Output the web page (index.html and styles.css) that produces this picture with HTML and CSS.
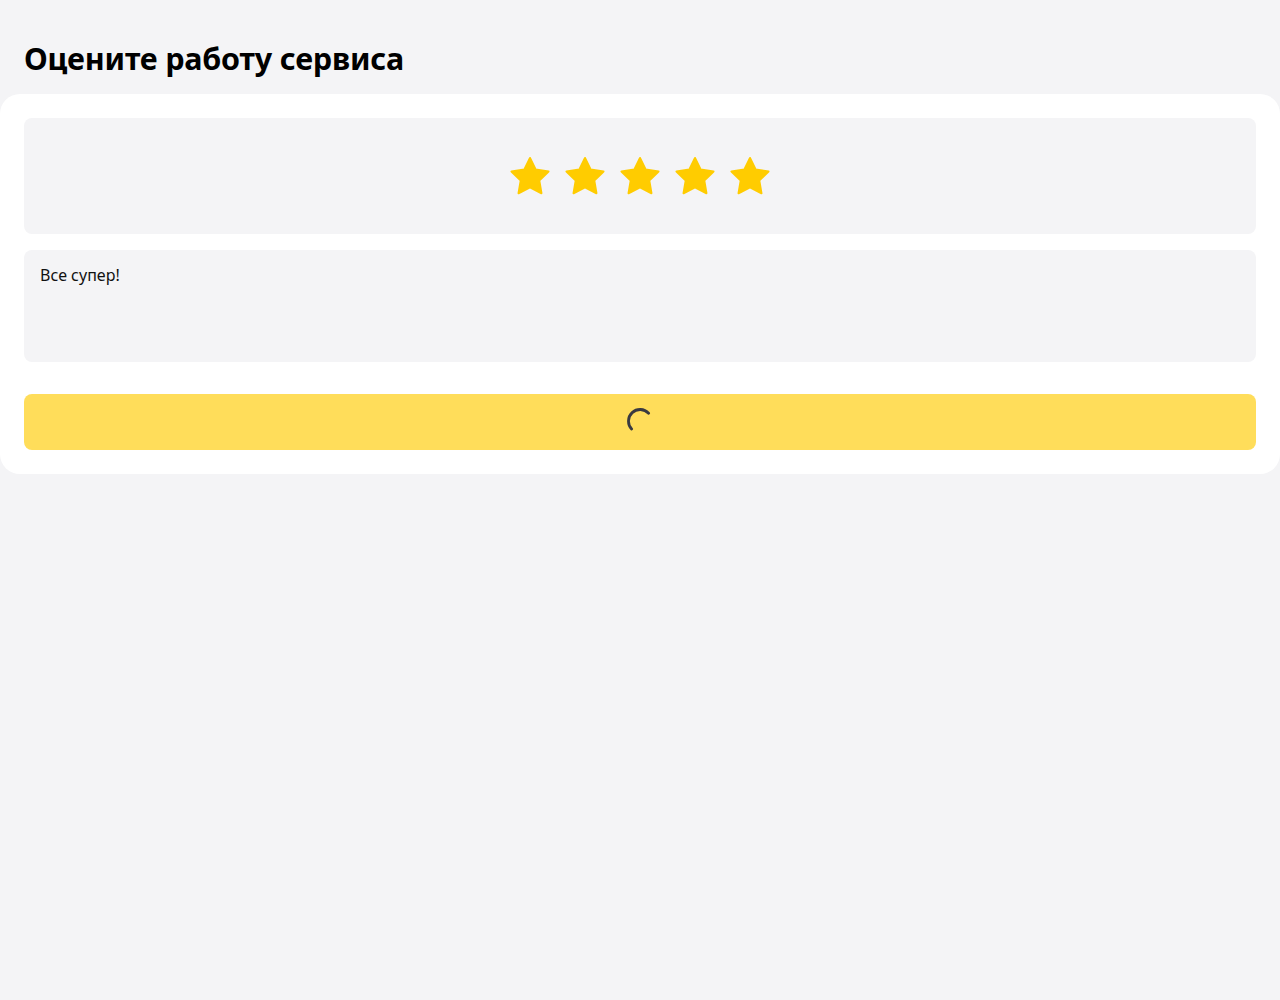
FILE: index.html
```html
<!DOCTYPE html>
<html lang="ru">
<head>
<meta charset="utf-8">
<link rel="stylesheet" href="styles.css">
</head>
<body>
<main class="page">
  <h1 class="title">Оцените работу сервиса</h1>
  <section class="card">
    <div class="stars">
      <svg class="star" viewBox="0 0 40 40"><polygon points="20,2 25.73,13.61 38.55,15.47 29.27,24.51 31.46,37.28 20,31.25 8.54,37.28 10.73,24.51 1.45,15.47 14.27,13.61"/></svg>
      <svg class="star" viewBox="0 0 40 40"><polygon points="20,2 25.73,13.61 38.55,15.47 29.27,24.51 31.46,37.28 20,31.25 8.54,37.28 10.73,24.51 1.45,15.47 14.27,13.61"/></svg>
      <svg class="star" viewBox="0 0 40 40"><polygon points="20,2 25.73,13.61 38.55,15.47 29.27,24.51 31.46,37.28 20,31.25 8.54,37.28 10.73,24.51 1.45,15.47 14.27,13.61"/></svg>
      <svg class="star" viewBox="0 0 40 40"><polygon points="20,2 25.73,13.61 38.55,15.47 29.27,24.51 31.46,37.28 20,31.25 8.54,37.28 10.73,24.51 1.45,15.47 14.27,13.61"/></svg>
      <svg class="star" viewBox="0 0 40 40"><polygon points="20,2 25.73,13.61 38.55,15.47 29.27,24.51 31.46,37.28 20,31.25 8.54,37.28 10.73,24.51 1.45,15.47 14.27,13.61"/></svg>
    </div>
    <div class="comment">Все супер!</div>
    <button class="submit" type="button">
      <svg class="spinner" viewBox="0 0 28 28"><path d="M5.6 21A11 11 0 0 1 22.6 5.2" fill="none" stroke="#3a3a40" stroke-width="2.8" stroke-linecap="round"/></svg>
    </button>
  </section>
</main>
</body>
</html>
```
FILE: styles.css
```css
html, body {
  margin: 0;
  padding: 0;
  background: #f4f4f6;
}
body {
  font-family: "Noto Sans", "Open Sans", sans-serif;
  color: #000;
}
.page {
  display: flex;
  flex-direction: column;
}
.title {
  margin: 0;
  padding: 38px 24px 16px;
  font-size: 30.5px;
  line-height: 40px;
  font-weight: 700;
  letter-spacing: -0.2px;
}
.card {
  background: #fff;
  border-radius: 20px;
  padding: 24px;
  display: flex;
  flex-direction: column;
}
.stars {
  background: #f4f4f6;
  border-radius: 8px;
  height: 116px;
  display: flex;
  justify-content: center;
  align-items: center;
  gap: 15px;
}
.star {
  width: 40px;
  height: 40px;
  fill: #fc0;
  stroke: #fc0;
  stroke-width: 2;
  stroke-linejoin: round;
}
.comment {
  margin-top: 16px;
  background: #f4f4f6;
  border-radius: 8px;
  height: 112px;
  box-sizing: border-box;
  padding: 14px 16px;
  font-size: 16px;
  line-height: 22px;
  color: #111;
}
.submit {
  margin-top: 32px;
  height: 56px;
  border: 0;
  border-radius: 8px;
  background: #ffdd5a;
  display: flex;
  align-items: center;
  justify-content: center;
  padding: 0;
}
.spinner {
  width: 28px;
  height: 28px;
}
```
